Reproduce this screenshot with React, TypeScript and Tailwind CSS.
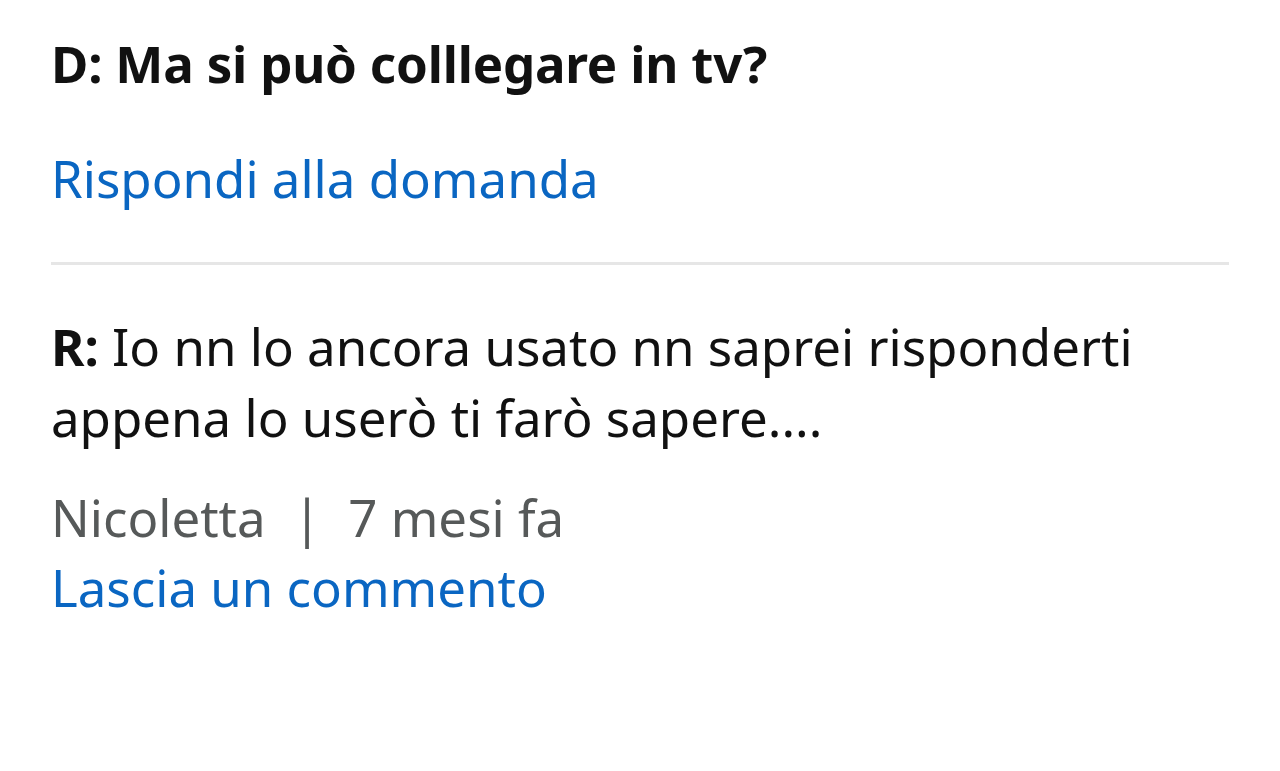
const App = () => {
  return (
    <div className="w-[1280px] h-[771px] bg-white px-[51px] pt-[28px] font-['Noto_Sans',sans-serif] text-[51px]">
      <div className="font-bold text-[#111111] leading-[70px] tracking-[-0.2px]">D: Ma si può colllegare in tv?</div>
      <div className="mt-[45px] text-[#0a66c2] leading-[70px]">Rispondi alla domanda</div>
      <div className="mt-[49px] h-[3px] bg-[#e6e6e6]" />
      <div className="mt-[46px] text-[#111111] leading-[71px]">
        <span className="font-bold">R:</span> Io nn lo ancora usato nn saprei risponderti
        <br />
        appena lo userò ti farò sapere....
      </div>
      <div className="mt-[29px] text-[#565959] leading-[70px]">
        Nicoletta <span className="mx-[14px]">|</span> 7 mesi fa
      </div>
      <div className="text-[#0a66c2] leading-[70px]">Lascia un commento</div>
    </div>
  );
};

export default App;
